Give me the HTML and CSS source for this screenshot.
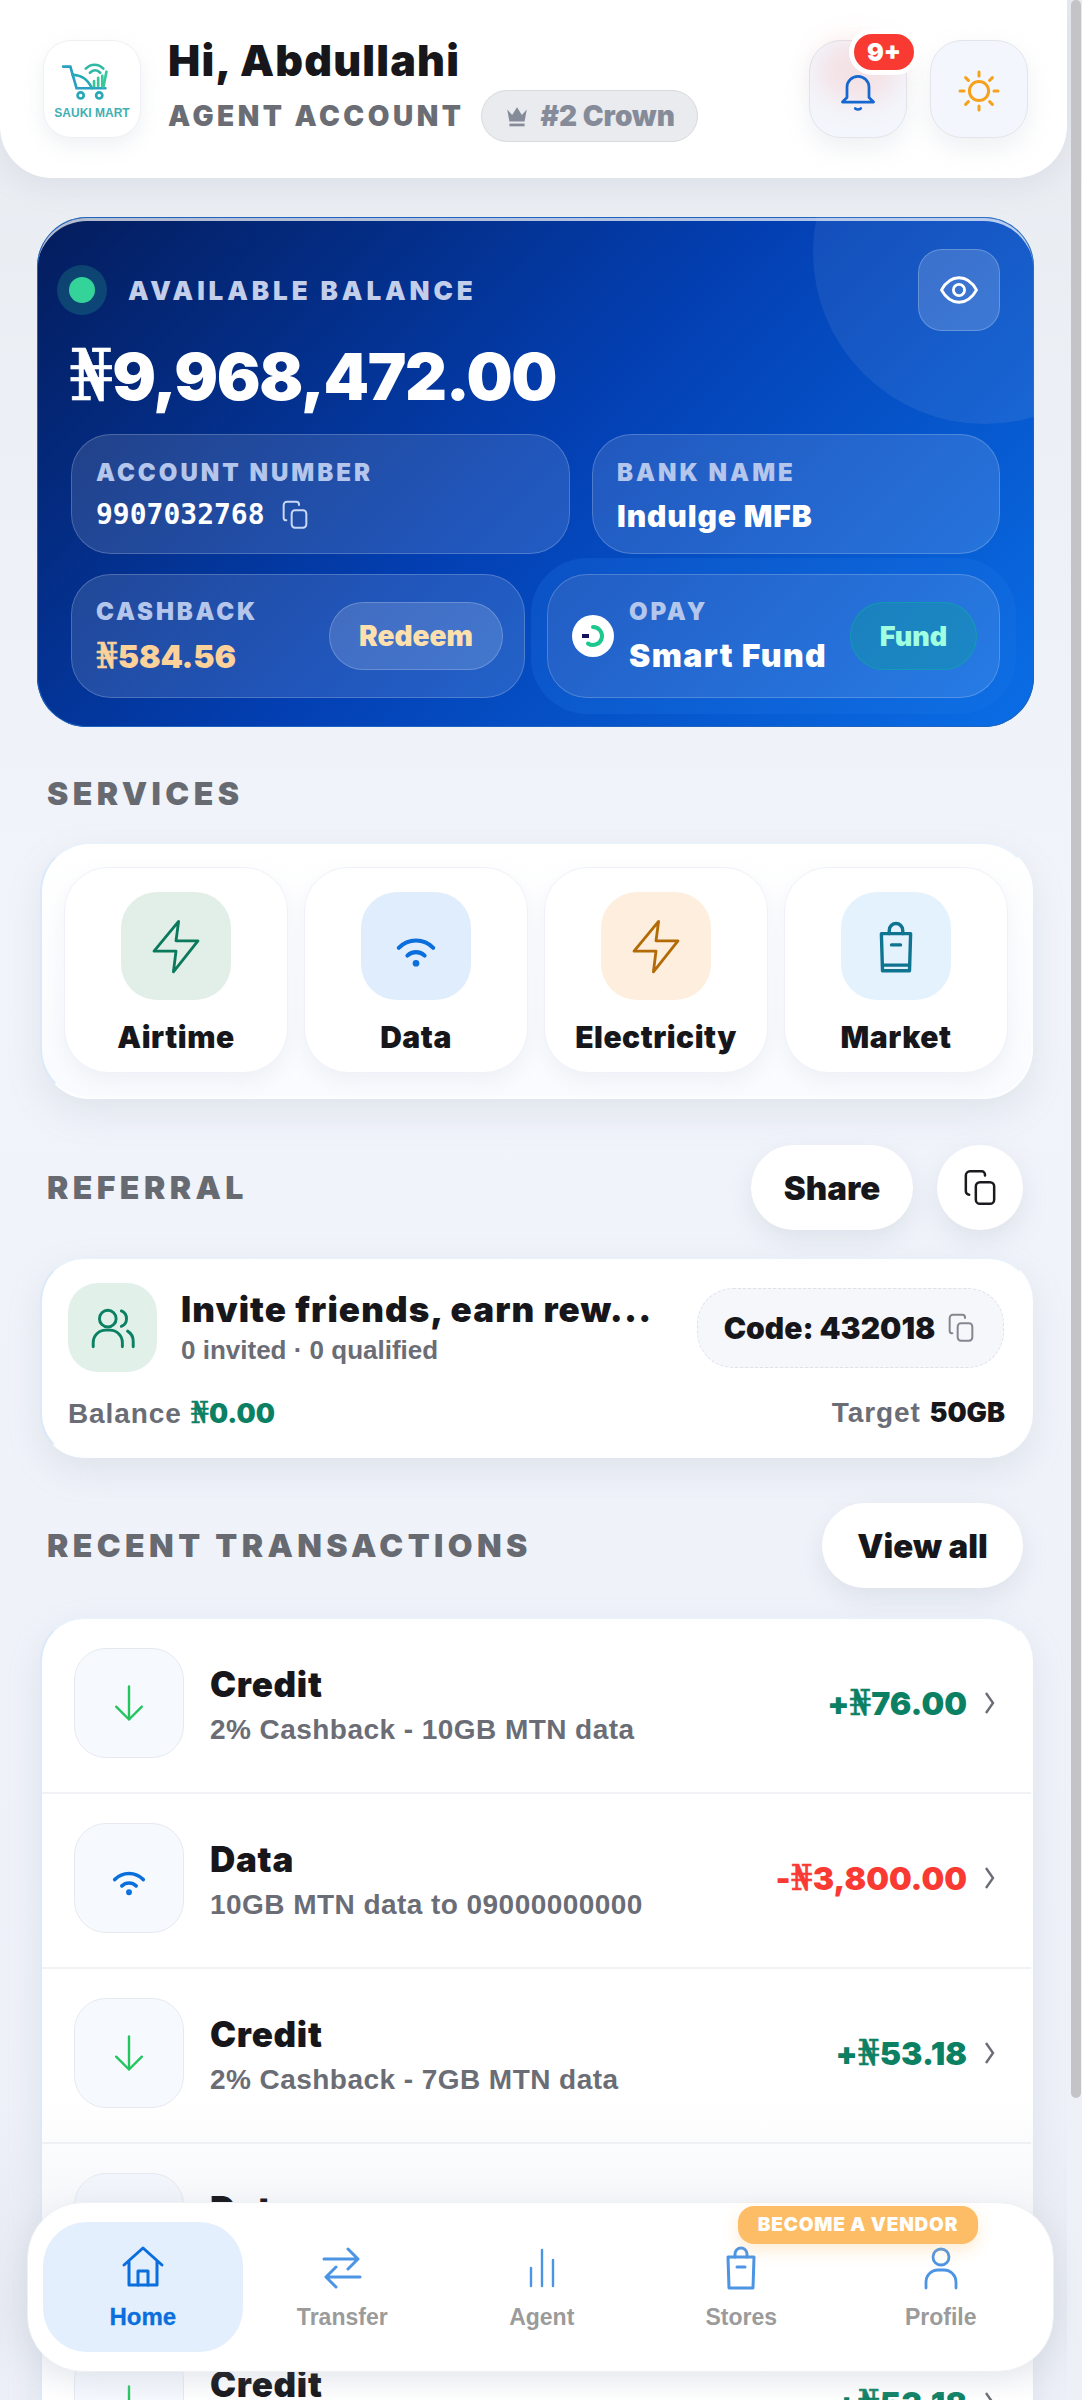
FILE: index.html
```html
<!DOCTYPE html>
<html lang="en">
<head>
  <meta charset="UTF-8">
  <title>Sauki Mart</title>
  <link rel="stylesheet" href="styles.css">
</head>
<body>
  <div class="app">
    <header class="top">
      <div class="logo">
        <svg class="logo-cart" viewBox="0 0 64 40" fill="none" stroke="#28a7b8" stroke-width="2.600" stroke-linecap="round">
          <path d="M4 6h7l6 21h28" stroke="#2a9fc4"/>
          <path d="M13 14c10 0 15 5 19 13" stroke="#27a9b5"/>
          <path d="M46 11l-3 15" stroke="#36c79a"/>
          <path d="M34 25v-5M38 25v-8M42 25v-10" stroke="#36c79a"/>
          <path d="M26 8c5-5 12-5 17 0M30 12c3-3 7-3 10 0" stroke="#2fb8a5"/>
          <circle cx="21" cy="34" r="3"/>
          <circle cx="39" cy="34" r="3"/>
        </svg>
        <span class="logo-name">SAUKI MART</span>
      </div>
      <div class="hello">
        <h1>Hi, Abdullahi</h1>
        <div class="hello-sub">
          <span class="acct">AGENT ACCOUNT</span>
          <span class="rank">
            <svg width="26" height="26" viewBox="0 0 24 24" fill="#858b99"><path d="M3 6l4.500 5L12 4l4.500 7L21 6l-2 11H5z"/><rect x="5" y="19" width="14" height="2.500"/></svg>
            #2 Crown
          </span>
        </div>
      </div>
      <div class="top-btns">
        <button class="tbtn">
          <span class="bell-glow"></span>
          <svg width="44" height="44" viewBox="0 0 24 24" fill="none" stroke="#1668d0" stroke-width="1.500" stroke-linecap="round" stroke-linejoin="round"><path d="M18 15.500V10a6 6 0 0 0-12 0v5.500L3.500 18h17z"/><path d="M10.500 21.500c.8.700 2.200.700 3 0"/></svg>
          <span class="badge">9+</span>
        </button>
        <button class="tbtn">
          <svg width="48" height="48" viewBox="0 0 24 24" fill="none" stroke="#f5a11c" stroke-width="1.500" stroke-linecap="round"><circle cx="12" cy="12" r="4.800"/><path d="M12 2.500v2M12 19.500v2M2.500 12h2M19.500 12h2M5.300 5.300l1.400 1.400M17.300 17.300l1.400 1.400M5.300 18.700l1.400-1.400M17.300 6.700l1.400-1.400"/></svg>
        </button>
      </div>
    </header>

    <main class="content">
      <section class="balance">
        <span class="balance-arc"></span>
        <div class="balance-top">
          <span class="live"><i></i></span>
          <span class="balance-label">AVAILABLE BALANCE</span>
          <button class="eye">
            <svg width="42" height="42" viewBox="0 0 24 24" fill="none" stroke="#fff" stroke-width="1.600" stroke-linejoin="round"><path d="M2 12c2.500-4.500 6-7 10-7s7.500 2.500 10 7c-2.500 4.500-6 7-10 7s-7.500-2.500-10-7z"/><circle cx="12" cy="12" r="3.200"/></svg>
          </button>
        </div>
        <div class="amount"><span class="n">₦</span>9,968,472.00</div>
        <div class="glass-row row-a">
          <div class="glass acct-box">
            <div class="glabel">ACCOUNT NUMBER</div>
            <div class="acct-no">9907032768
              <svg width="32" height="32" viewBox="0 0 24 24" fill="none" stroke="#c9d8f5" stroke-width="1.500" stroke-linecap="round" stroke-linejoin="round"><rect x="9.500" y="8.500" width="11" height="13" rx="2.500"/><path d="M15 4.500V4a2 2 0 0 0-2-2H6a2.500 2.500 0 0 0-2.500 2.500V14a2 2 0 0 0 2 2"/></svg>
            </div>
          </div>
          <div class="glass bank-box">
            <div class="glabel">BANK NAME</div>
            <div class="gvalue">Indulge MFB</div>
          </div>
        </div>
        <div class="glass-row row-b">
          <div class="glass wide">
            <div class="wide-text">
              <div class="glabel">CASHBACK</div>
              <div class="gvalue cash"><span class="n">₦</span>584.56</div>
            </div>
            <button class="pill redeem">Redeem</button>
          </div>
          <div class="glass wide opay">
            <svg class="opay-logo" viewBox="0 0 42 42"><circle cx="21" cy="21" r="21" fill="#fff"/><path d="M21 12a9 9 0 1 1-5 16.500" fill="none" stroke="#1dc88e" stroke-width="4" stroke-linecap="round"/><rect x="10" y="19" width="7" height="4" fill="#14145a"/></svg>
            <div class="wide-text">
              <div class="glabel">OPAY</div>
              <div class="gvalue">Smart Fund</div>
            </div>
            <button class="pill fund">Fund</button>
          </div>
        </div>
      </section>

      <div class="sec-head first"><h2>SERVICES</h2></div>
      <section class="card services">
        <div class="svc">
          <span class="svc-ic green"><svg width="62" height="62" viewBox="0 0 24 24" fill="none" stroke="#0b7a5c" stroke-width="1.100" stroke-linejoin="round"><path d="M13 2.500L3.500 14H12l-1 8 9.500-12H12z"/></svg></span>
          <span class="svc-name">Airtime</span>
        </div>
        <div class="svc">
          <span class="svc-ic blue"><svg width="46" height="46" viewBox="0 0 24 24" fill="none" stroke="#0a6fdc" stroke-width="2.100" stroke-linecap="round"><path d="M3 13a12.500 12.500 0 0 1 18 0M7.500 17a6.500 6.500 0 0 1 9 0"/><circle cx="12" cy="21" r=".7" fill="#0a6fdc"/></svg></span>
          <span class="svc-name">Data</span>
        </div>
        <div class="svc">
          <span class="svc-ic orange"><svg width="62" height="62" viewBox="0 0 24 24" fill="none" stroke="#b26b06" stroke-width="1.100" stroke-linejoin="round"><path d="M13 2.500L3.500 14H12l-1 8 9.500-12H12z"/></svg></span>
          <span class="svc-name">Electricity</span>
        </div>
        <div class="svc">
          <span class="svc-ic sky"><svg width="54" height="54" viewBox="0 0 24 24" fill="none" stroke="#0e7490" stroke-width="1.500" stroke-linecap="round" stroke-linejoin="round"><path d="M5.500 6.500h13L18 23H6z"/><path d="M9 6.500V5a3 3 0 0 1 6 0v1.500M10 11.500h4M6 20.500h12"/></svg></span>
          <span class="svc-name">Market</span>
        </div>
      </section>

      <div class="sec-head ref-head">
        <h2>REFERRAL</h2>
        <div class="head-btns">
          <button class="round-btn share">Share</button>
          <button class="round-btn copy-btn">
            <svg width="40" height="40" viewBox="0 0 24 24" fill="none" stroke="#1b1b1f" stroke-width="1.500" stroke-linecap="round" stroke-linejoin="round"><rect x="9.500" y="8.500" width="11" height="13" rx="2.500"/><path d="M15 4.500V4a2 2 0 0 0-2-2H6a2.500 2.500 0 0 0-2.500 2.500V14a2 2 0 0 0 2 2"/></svg>
          </button>
        </div>
      </div>
      <section class="card referral">
        <div class="ref-top">
          <span class="ref-ic"><svg width="50" height="50" viewBox="0 0 24 24" fill="none" stroke="#0b8063" stroke-width="1.400" stroke-linecap="round"><circle cx="9.500" cy="7.500" r="4"/><path d="M2.500 21v-2a6 6 0 0 1 6-6h2a6 6 0 0 1 6 6v2M16 3.800a4 4 0 0 1 0 7.400M19 13.500c1.700 1 2.700 2.800 2.700 5V21"/></svg></span>
          <div class="ref-text">
            <div class="ref-title">Invite friends, earn rew...</div>
            <div class="ref-sub">0 invited · 0 qualified</div>
          </div>
          <div class="ref-code">Code: 432018
            <svg width="32" height="32" viewBox="0 0 24 24" fill="none" stroke="#85878f" stroke-width="1.500" stroke-linecap="round" stroke-linejoin="round"><rect x="9.500" y="8.500" width="11" height="13" rx="2.500"/><path d="M15 4.500V4a2 2 0 0 0-2-2H6a2.500 2.500 0 0 0-2.500 2.500V14a2 2 0 0 0 2 2"/></svg>
          </div>
        </div>
        <div class="ref-foot">
          <span>Balance <b class="g"><span class="n">₦</span>0.00</b></span>
          <span>Target <b>50GB</b></span>
        </div>
      </section>

      <div class="sec-head tx-head">
        <h2>RECENT TRANSACTIONS</h2>
        <button class="round-btn view">View all</button>
      </div>
      <section class="card txs">
        <div class="tx">
          <span class="tx-ic"><svg width="44" height="44" viewBox="0 0 24 24" fill="none" stroke="#22c55e" stroke-width="1.300" stroke-linecap="round" stroke-linejoin="round"><path d="M12 3v18M5 14l7 7 7-7"/></svg></span>
          <div class="tx-text"><div class="tx-title">Credit</div><div class="tx-sub">2% Cashback - 10GB MTN data</div></div>
          <div class="tx-amt g">+<span class="n">₦</span>76.00</div>
          <svg class="chev" width="14" height="28" viewBox="0 0 14 28" fill="none" stroke="#6b6d76" stroke-width="2.400"><path d="M3 4l7 10-7 10"/></svg>
        </div>
        <div class="tx">
          <span class="tx-ic"><svg width="38" height="38" viewBox="0 0 24 24" fill="none" stroke="#0a6fdc" stroke-width="2.300" stroke-linecap="round"><path d="M3 13a12.500 12.500 0 0 1 18 0M7.500 17a6.500 6.500 0 0 1 9 0"/><circle cx="12" cy="21" r=".7" fill="#0a6fdc"/></svg></span>
          <div class="tx-text"><div class="tx-title">Data</div><div class="tx-sub">10GB MTN data to 09000000000</div></div>
          <div class="tx-amt r">-<span class="n">₦</span>3,800.00</div>
          <svg class="chev" width="14" height="28" viewBox="0 0 14 28" fill="none" stroke="#6b6d76" stroke-width="2.400"><path d="M3 4l7 10-7 10"/></svg>
        </div>
        <div class="tx">
          <span class="tx-ic"><svg width="44" height="44" viewBox="0 0 24 24" fill="none" stroke="#22c55e" stroke-width="1.300" stroke-linecap="round" stroke-linejoin="round"><path d="M12 3v18M5 14l7 7 7-7"/></svg></span>
          <div class="tx-text"><div class="tx-title">Credit</div><div class="tx-sub">2% Cashback - 7GB MTN data</div></div>
          <div class="tx-amt g">+<span class="n">₦</span>53.18</div>
          <svg class="chev" width="14" height="28" viewBox="0 0 14 28" fill="none" stroke="#6b6d76" stroke-width="2.400"><path d="M3 4l7 10-7 10"/></svg>
        </div>
        <div class="tx">
          <span class="tx-ic"><svg width="38" height="38" viewBox="0 0 24 24" fill="none" stroke="#0a6fdc" stroke-width="2.300" stroke-linecap="round"><path d="M3 13a12.500 12.500 0 0 1 18 0M7.500 17a6.500 6.500 0 0 1 9 0"/><circle cx="12" cy="21" r=".7" fill="#0a6fdc"/></svg></span>
          <div class="tx-text"><div class="tx-title">Data</div><div class="tx-sub">10GB MTN data to 09000000000</div></div>
          <div class="tx-amt r">-<span class="n">₦</span>3,800.00</div>
          <svg class="chev" width="14" height="28" viewBox="0 0 14 28" fill="none" stroke="#6b6d76" stroke-width="2.400"><path d="M3 4l7 10-7 10"/></svg>
        </div>
        <div class="tx">
          <span class="tx-ic"><svg width="44" height="44" viewBox="0 0 24 24" fill="none" stroke="#22c55e" stroke-width="1.300" stroke-linecap="round" stroke-linejoin="round"><path d="M12 3v18M5 14l7 7 7-7"/></svg></span>
          <div class="tx-text"><div class="tx-title">Credit</div><div class="tx-sub">2% Cashback - 7GB MTN data</div></div>
          <div class="tx-amt g">+<span class="n">₦</span>53.18</div>
          <svg class="chev" width="14" height="28" viewBox="0 0 14 28" fill="none" stroke="#6b6d76" stroke-width="2.400"><path d="M3 4l7 10-7 10"/></svg>
        </div>
      </section>
    </main>

    <div class="nav-fade"></div>
    <nav class="nav">
      <a class="nav-item active">
        <svg width="48" height="48" viewBox="0 0 24 24" fill="none" stroke="#0a6fdc" stroke-width="1.500" stroke-linecap="round" stroke-linejoin="round"><path d="M2.500 11L12 2.500 21.500 11M5 9v12h14V9"/><path d="M9.500 21v-7h5v7"/></svg>
        Home
      </a>
      <a class="nav-item">
        <svg width="48" height="48" viewBox="0 0 24 24" fill="none" stroke="#4c94e4" stroke-width="1.500" stroke-linecap="round" stroke-linejoin="round"><path d="M3 7.500h17M15 2.500l5 5-5 5M21 16.500H4M9 11.500l-5 5 5 5"/></svg>
        Transfer
      </a>
      <a class="nav-item">
        <svg width="48" height="48" viewBox="0 0 24 24" fill="none" stroke="#4c94e4" stroke-width="1.200" stroke-linecap="round"><path d="M12 3v18M6.500 12v9M17.500 8v13"/></svg>
        Agent
      </a>
      <a class="nav-item">
        <svg width="48" height="48" viewBox="0 0 24 24" fill="none" stroke="#4c94e4" stroke-width="1.500" stroke-linecap="round" stroke-linejoin="round"><path d="M5.500 6.500h13L18 22H6z"/><path d="M9 6.500V5a3 3 0 0 1 6 0v1.500M10 11.500h4"/></svg>
        Stores
      </a>
      <a class="nav-item">
        <svg width="48" height="48" viewBox="0 0 24 24" fill="none" stroke="#4c94e4" stroke-width="1.400" stroke-linecap="round"><circle cx="12" cy="6.500" r="4"/><path d="M4.500 22v-3a6 6 0 0 1 6-6h3a6 6 0 0 1 6 6v3"/></svg>
        Profile
      </a>
      <span class="vendor">BECOME A VENDOR</span>
    </nav>
    <div class="scrollbar"><span></span></div>
  </div>
</body>
</html>
```

FILE: styles.css
```css
* {
  margin: 0;
  padding: 0;
  box-sizing: border-box;
}

html, body {
  height: 100%;
  overflow: hidden;
}

body {
  font-family: "Liberation Sans", Arial, sans-serif;
  background: #eef1f7;
  color: #17171b;
}

button {
  font-family: inherit;
  border: none;
  background: none;
}

/* heavy text, looks like a black weight in the reference */
h1, h2, .acct, .rank, .badge, .balance-label, .amount, .glabel, .gvalue, .pill,
.svc-name, .round-btn, .ref-title, .ref-code, .ref-foot b, .tx-title, .tx-amt, .vendor {
  font-family: Inter, "Liberation Sans", sans-serif;
  font-weight: 900;
}

.n {
  font-family: "DejaVu Serif", "Liberation Serif", serif;
  font-size: 1.08em;
  font-weight: 400;
  -webkit-text-stroke: 0.6px currentColor;
}

.app {
  position: relative;
  width: 1082px;
  height: 2400px;
  overflow: hidden;
  background: linear-gradient(180deg, #e8ebf0 0, #f1f4fa 900px, #edf0f7 2400px);
}

/* header */
.top {
  width: 1067px;
  height: 178px;
  background: #fff;
  border-radius: 0 0 52px 52px;
  box-shadow: 0 6px 30px rgba(150, 160, 180, 0.18);
  padding: 40px 39px 0 43px;
  display: flex;
  align-items: flex-start;
}

.logo {
  width: 98px;
  height: 98px;
  border-radius: 28px;
  background: #fff;
  border: 1px solid #eef0f3;
  box-shadow: 0 8px 20px rgba(150, 160, 180, 0.15);
  display: flex;
  flex-direction: column;
  align-items: center;
  justify-content: center;
  gap: 2px;
}

.logo-cart {
  width: 66px;
  height: 46px;
}

.logo-name {
  font-size: 12px;
  font-weight: 700;
  color: #3fb0b4;
}

.hello {
  margin-left: 27px;
  flex: 1;
}

.hello h1 {
  font-size: 43px;
  line-height: 40px;
  letter-spacing: 1.200px;
}

.hello-sub {
  display: flex;
  align-items: center;
  gap: 17px;
  margin-top: 10px;
}

.acct {
  font-size: 28px;
  letter-spacing: 3.500px;
  color: #6b6d74;
}

.rank {
  height: 52px;
  padding: 0 22px;
  border-radius: 26px;
  background: #e9ebee;
  border: 1.500px solid #d8dadd;
  display: flex;
  align-items: center;
  gap: 10px;
  font-size: 28px;
  color: #858b99;
}

.top-btns {
  display: flex;
  gap: 23px;
}

.tbtn {
  position: relative;
  width: 98px;
  height: 98px;
  border-radius: 32px;
  background: #f3f6fc;
  border: 1.500px solid #e3e5ea;
  box-shadow: 0 10px 24px rgba(150, 160, 180, 0.16);
  display: flex;
  align-items: center;
  justify-content: center;
}

.tbtn svg {
  position: relative;
  margin-top: 4px;
}

.bell-glow {
  position: absolute;
  left: 8px;
  top: 0;
  width: 80px;
  height: 60px;
  border-radius: 40px;
  background: rgba(255, 70, 60, 0.12);
  filter: blur(14px);
}

.badge {
  position: absolute;
  left: 39px;
  top: -12px;
  width: 70px;
  height: 46px;
  border-radius: 23px;
  background: #f93a33;
  border: 5px solid #fff;
  color: #fff;
  font-size: 25px;
  line-height: 36px;
  text-align: center;
}

/* balance card */
.content {
  width: 1067px;
  padding: 39px 33px 0 37px;
}

.balance {
  position: relative;
  height: 510px;
  border-radius: 50px;
  overflow: hidden;
  background: linear-gradient(135deg, #041c5c 0, #0340b4 50%, #0a6ee6 100%);
  box-shadow: inset 0 0 0 1px #1e63bd, inset 0 4px 0 rgba(255, 255, 255, 0.7);
  padding: 32px 34px 0;
  color: #fff;
}

.balance-arc {
  position: absolute;
  left: 776px;
  top: -137px;
  width: 344px;
  height: 344px;
  border-radius: 50%;
  background: rgba(255, 255, 255, 0.07);
}

.balance-top {
  position: relative;
  display: flex;
  align-items: center;
  height: 82px;
}

.live {
  width: 50px;
  height: 50px;
  margin-left: -14px;
  border-radius: 50%;
  background: rgba(52, 211, 153, 0.2);
  display: flex;
  align-items: center;
  justify-content: center;
}

.live i {
  width: 26px;
  height: 26px;
  border-radius: 50%;
  background: #34d399;
}

.balance-label {
  margin-left: 21px;
  flex: 1;
  font-size: 26px;
  letter-spacing: 3.900px;
  color: #c3cfea;
}

.eye {
  width: 82px;
  height: 82px;
  border-radius: 24px;
  background: rgba(255, 255, 255, 0.16);
  border: 1.500px solid rgba(255, 255, 255, 0.22);
  display: flex;
  align-items: center;
  justify-content: center;
}

.amount {
  position: relative;
  margin-top: 8px;
  margin-left: -2px;
  font-size: 65px;
  line-height: 75px;
  letter-spacing: -1.400px;
}

.glass-row {
  position: relative;
  display: flex;
  gap: 22px;
}

.row-a {
  margin-top: 20px;
}

.row-b {
  margin-top: 20px;
}

.glass {
  border-radius: 40px;
  background: rgba(255, 255, 255, 0.12);
  border: 1.500px solid rgba(255, 255, 255, 0.2);
}

.acct-box {
  width: 499px;
  height: 120px;
  padding: 24px 24px;
}

.bank-box {
  width: 408px;
  height: 120px;
  padding: 24px 24px;
}

.glabel {
  font-size: 24px;
  line-height: 28px;
  letter-spacing: 3px;
  color: #b5c6ec;
}

.acct-no {
  margin-top: 11px;
  display: flex;
  align-items: center;
  gap: 14px;
  font-family: "DejaVu Sans Mono", "Liberation Mono", monospace;
  font-size: 28px;
  font-weight: 700;
}

.gvalue {
  margin-top: 11px;
  font-size: 30px;
  line-height: 36px;
  letter-spacing: 0.900px;
}

.wide {
  width: 454px;
  height: 124px;
  display: flex;
  align-items: center;
  padding: 0 22px 0 24px;
}

.wide-text {
  flex: 1;
}

.wide .glabel {
  letter-spacing: 2.800px;
}

.wide .gvalue {
  margin-top: 12px;
  font-size: 32px;
  letter-spacing: 1.400px;
}

.wide .gvalue.cash {
  color: #fdd29a;
  letter-spacing: -0.200px;
}

.opay {
  width: 453px;
  box-shadow: 0 0 0 16px rgba(30, 120, 230, 0.25);
}

.opay-logo {
  width: 42px;
  height: 42px;
  margin-right: 15px;
}

.pill {
  height: 68px;
  border-radius: 34px;
  font-size: 28px;
}

.redeem {
  width: 174px;
  margin-right: -1px;
  background: rgba(255, 255, 255, 0.15);
  border: 1.500px solid rgba(255, 255, 255, 0.2);
  color: #fde0ae;
}

.fund {
  width: 127px;
  font-size: 27px;
  background: rgba(10, 160, 150, 0.38);
  border: 1.500px solid rgba(10, 180, 160, 0.45);
  color: #a0ffe0;
}

/* sections */
.sec-head {
  display: flex;
  align-items: center;
  justify-content: space-between;
  padding: 0 11px 0 10px;
}

.sec-head h2 {
  font-size: 32px;
  letter-spacing: 4.400px;
  color: #686a72;
}

.first {
  height: 40px;
  margin-top: 46px;
}

.card {
  margin: 0 0 0 3px;
  width: 993px;
  background: #fff;
  border: 2px solid #fdfeff;
  border-top-color: #e9f1fb;
  border-left-color: #dbe9f9;
  box-shadow: 0 14px 34px rgba(150, 160, 180, 0.18);
}

.services {
  margin-top: 29px;
  height: 257px;
  border-radius: 50px;
  padding: 23px 22px;
  display: grid;
  grid-template-columns: repeat(4, 224px);
  gap: 16px;
  background: linear-gradient(180deg, #fff, #f9fbfe);
}

.svc {
  height: 206px;
  border-radius: 44px;
  background: #fff;
  border: 1.500px solid #eef2f8;
  box-shadow: 0 8px 20px rgba(170, 180, 200, 0.14);
  display: flex;
  flex-direction: column;
  align-items: center;
  padding-top: 24px;
}

.svc-ic {
  width: 110px;
  height: 108px;
  border-radius: 36px;
  display: flex;
  align-items: center;
  justify-content: center;
}

.green { background: #e2efe9; }
.blue { background: #e0edfc; }
.orange { background: #fdeedd; }
.sky { background: #e3f2fd; }

.svc-name {
  margin-top: 19px;
  font-size: 30px;
  letter-spacing: 0.500px;
}

.ref-head {
  margin-top: 46px;
  height: 85px;
}

.head-btns {
  display: flex;
  gap: 24px;
}

.round-btn {
  height: 85px;
  border-radius: 43px;
  background: #fff;
  box-shadow: 0 10px 26px rgba(150, 160, 180, 0.2);
  font-size: 33px;
  color: #17171b;
  display: flex;
  align-items: center;
  justify-content: center;
}

.share {
  width: 162px;
}

.view {
  width: 201px;
}

.copy-btn {
  width: 86px;
}

.referral {
  margin-top: 27px;
  height: 201px;
  border-radius: 44px;
  padding: 24px 26px;
}

.ref-top {
  display: flex;
  align-items: center;
}

.ref-ic {
  width: 89px;
  height: 89px;
  border-radius: 30px;
  background: #e2f0ea;
  display: flex;
  align-items: center;
  justify-content: center;
}

.ref-text {
  flex: 1;
  margin-left: 24px;
}

.ref-title {
  font-size: 35px;
  line-height: 40px;
  letter-spacing: 1.100px;
  white-space: nowrap;
}

.ref-sub {
  margin-top: 6px;
  font-size: 26px;
  font-weight: 700;
  color: #6b6d76;
}

.ref-code {
  width: 307px;
  flex: none;
  height: 80px;
  margin-right: 1px;
  border-radius: 36px;
  background: #f5f7fb;
  border: 1.500px dashed #dde1e8;
  display: flex;
  align-items: center;
  justify-content: center;
  gap: 10px;
  font-size: 30px;
}

.ref-foot {
  margin-top: 24px;
  display: flex;
  justify-content: space-between;
  font-size: 28px;
  font-weight: 700;
  letter-spacing: 0.900px;
  color: #6b6d76;
}

.ref-foot b {
  font-size: 27px;
  color: #17171b;
  letter-spacing: 0;
}

.ref-foot b.g,
.g {
  color: #0b8063;
}

.r {
  color: #f93a33;
}

.tx-head {
  margin-top: 45px;
  height: 85px;
}

.txs {
  margin-top: 29px;
  border-radius: 44px 44px 0 0;
  border-bottom: none;
}

.tx {
  height: 175px;
  padding: 0 34px 6px 32px;
  display: flex;
  align-items: center;
  border-bottom: 2px solid #f1f2f5;
}

.tx-ic {
  width: 110px;
  height: 110px;
  border-radius: 32px;
  background: #f6f9fe;
  border: 1.500px solid #e6e9ef;
  display: flex;
  align-items: center;
  justify-content: center;
}

.tx-text {
  flex: 1;
  margin-left: 26px;
  padding-top: 5px;
}

.tx-title {
  position: relative;
  z-index: 2;
  font-size: 35px;
  line-height: 40px;
  letter-spacing: 0.700px;
}

.tx-sub {
  margin-top: 10px;
  font-size: 28px;
  font-weight: 700;
  letter-spacing: 0.450px;
  color: #6b6d76;
}

.tx-amt {
  font-size: 32px;
}

.chev {
  margin-left: 16px;
}

/* bottom nav */
.nav-fade {
  position: absolute;
  z-index: 1;
  left: 0;
  bottom: 0;
  width: 1067px;
  height: 300px;
  background: linear-gradient(180deg, rgba(225, 228, 236, 0), rgba(225, 228, 236, 0.55) 70%, rgba(225, 228, 236, 0));
}

.nav {
  position: absolute;
  z-index: 3;
  left: 27px;
  top: 2202px;
  width: 1027px;
  height: 170px;
  border-radius: 56px;
  background: #fff;
  border: 1.500px solid #eef0f4;
  box-shadow: 0 8px 30px rgba(150, 160, 180, 0.2);
  padding: 19px 15px;
  display: grid;
  grid-template-columns: repeat(5, 199.500px);
}

.nav-item {
  border-radius: 44px;
  display: flex;
  flex-direction: column;
  align-items: center;
  justify-content: center;
  gap: 12px;
  font-size: 23px;
  font-weight: 700;
  color: #9b9b9b;
}

.nav-item.active {
  background: #e3effc;
  color: #0a6fdc;
  font-size: 24px;
  -webkit-text-stroke: 0.3px currentColor;
}

.vendor {
  position: absolute;
  left: 710px;
  top: 3px;
  width: 240px;
  height: 38px;
  border-radius: 16px;
  background: #fdbd66;
  box-shadow: 0 6px 16px rgba(253, 189, 102, 0.3);
  color: #fff;
  font-size: 19px;
  line-height: 38px;
  text-align: center;
  letter-spacing: 0.800px;
}

/* window scrollbar */
.scrollbar {
  position: absolute;
  z-index: 4;
  right: 0;
  top: 0;
  width: 11px;
  height: 2400px;
}

.scrollbar span {
  display: block;
  width: 10px;
  height: 2098px;
  border-radius: 5px;
  background: #c4c4c6;
}
```
